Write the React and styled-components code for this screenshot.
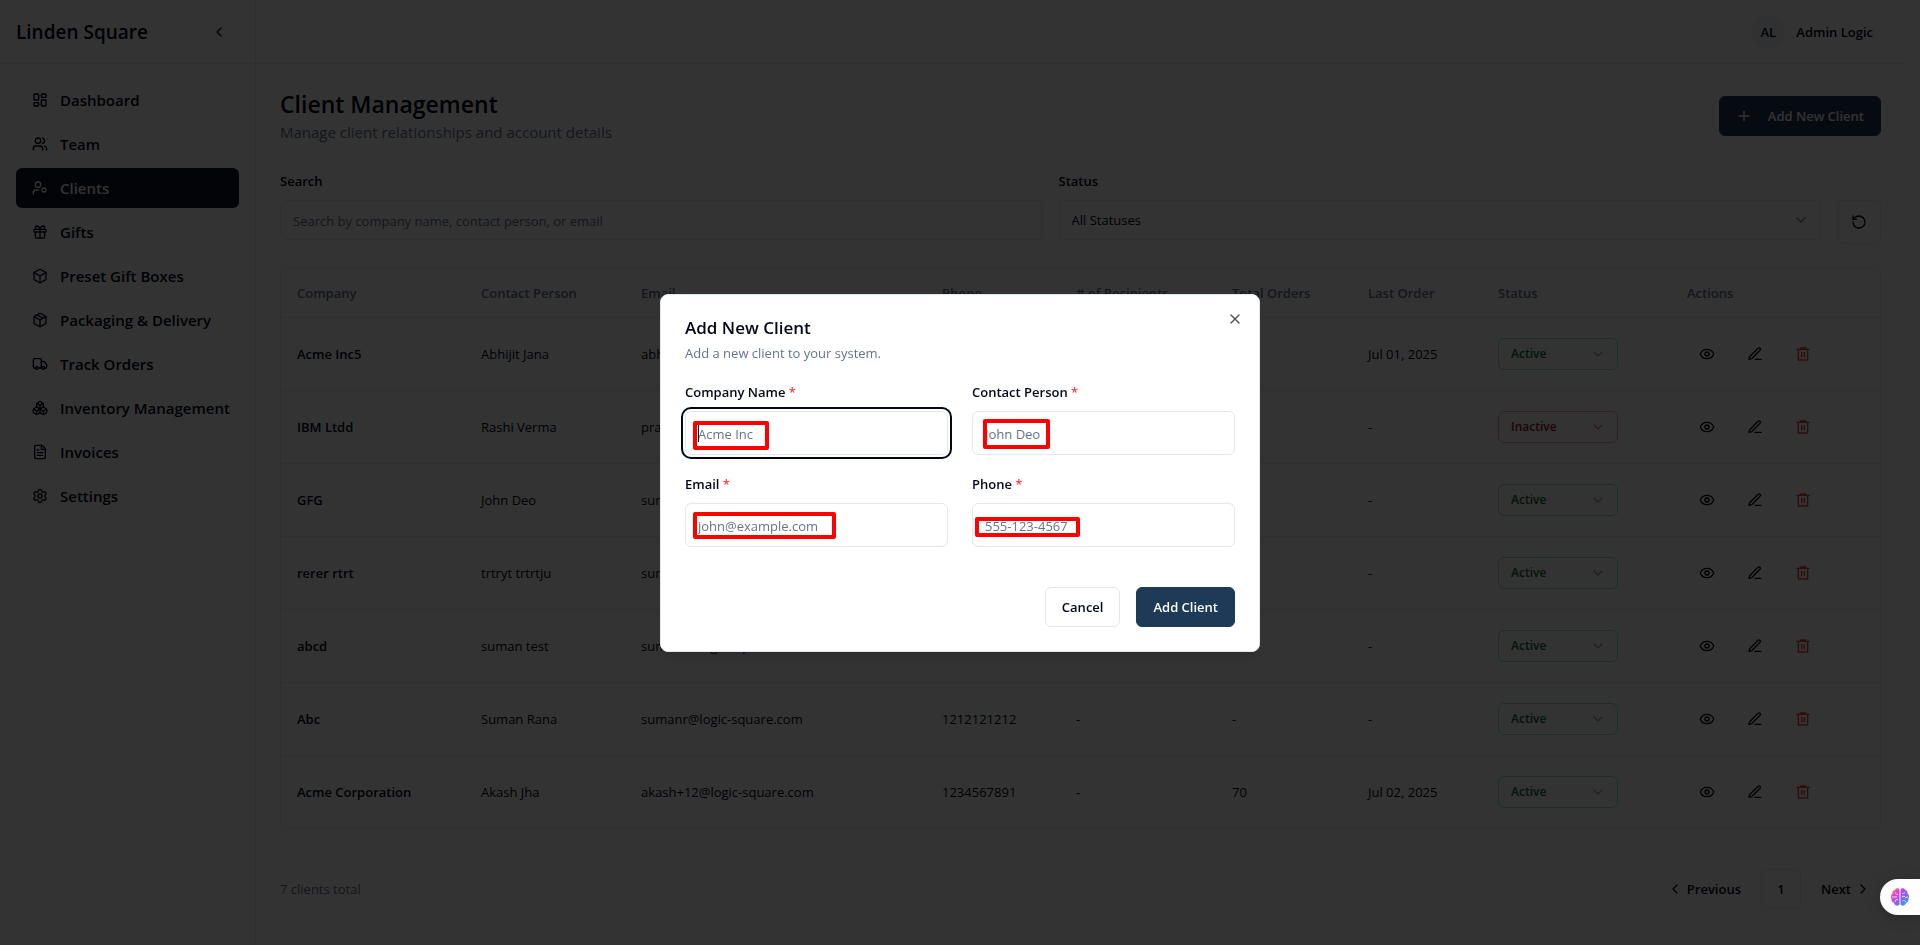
import React from "react";
import styled, { createGlobalStyle, css } from "styled-components";
import {
  Box, Boxes, ChevronDown, ChevronLeft, ChevronRight, Eye, FileText, Gift,
  LayoutDashboard, Package, Plus, RotateCcw, Settings, Truck, Users, X,
} from "lucide-react";
import { RiDeleteBin6Line } from "react-icons/ri";

const ink = "#020817";
const muted = "#64748b";
const line = "#e2e8f0";
const navy = "#1e3a56";

const GlobalStyle = createGlobalStyle`
  *, *::before, *::after { box-sizing: border-box; }
  html { background: #fff; }
  body {
    margin: 0;
    padding-right: 15px;
    color: ${ink};
    font: 400 13px/20px "Segoe UI", "Open Sans", "Noto Sans", sans-serif;
    overflow: hidden;
  }
  h1, h2, p { margin: 0; }
  button, input, select { font: inherit; color: inherit; }
  button { cursor: pointer; }
`;

const Shell = styled.div`
  display: flex;
  min-height: 100vh;
`;

const Sidebar = styled.aside`
  flex: 0 0 256px;
  min-width: 0;
  border-right: 1px solid ${line};
`;

const Brand = styled.div`
  display: flex;
  align-items: center;
  justify-content: space-between;
  height: 64px;
  padding: 0 16px;
  border-bottom: 1px solid ${line};
  font-size: 19px;
  font-weight: 600;
  line-height: 28px;
`;

const PlainButton = styled.button`
  display: inline-flex;
  align-items: center;
  justify-content: center;
  width: 40px;
  height: 40px;
  padding: 0;
  border: 0;
  border-radius: 6px;
  background: transparent;
  color: ${(p) => (p.$danger ? "#ef4444" : ink)};
`;

const Nav = styled.nav`
  display: flex;
  flex-direction: column;
  gap: 4px;
  padding: 16px;
`;

const NavLink = styled.a`
  display: flex;
  align-items: center;
  gap: 12px;
  height: 40px;
  padding: 0 0 0 16px;
  border-radius: 6px;
  font-size: 15px;
  font-weight: 600;
  white-space: nowrap;
  text-decoration: none;
  color: ${(p) => (p.$active ? "#f8fafc" : ink)};
  background: ${(p) => (p.$active ? "#0f172a" : "transparent")};
  svg { flex: none; }
`;

const Content = styled.div`
  flex: 1;
  min-width: 0;
`;

const TopBar = styled.header`
  display: flex;
  align-items: center;
  justify-content: flex-end;
  gap: 12px;
  height: 64px;
  padding: 0 32px;
  border-bottom: 1px solid ${line};
  font-weight: 600;
`;

const Avatar = styled.span`
  display: grid;
  place-items: center;
  width: 32px;
  height: 32px;
  border-radius: 50%;
  background: #f1f5f9;
`;

const Main = styled.main`
  display: flex;
  flex-direction: column;
  padding: 24px;
`;

const TitleRow = styled.div`
  display: flex;
  align-items: center;
  justify-content: space-between;
`;

const Title = styled.h1`
  font-size: 23px;
  font-weight: 600;
  line-height: 32px;
`;

const Subtitle = styled.p`
  font-size: 15px;
  line-height: 24px;
  color: ${muted};
`;

const Button = styled.button`
  display: inline-flex;
  align-items: center;
  justify-content: center;
  gap: 16px;
  height: 40px;
  padding: 0 16px;
  border: 1px solid ${(p) => (p.$outline ? line : navy)};
  border-radius: 6px;
  background: ${(p) => (p.$outline ? "#fff" : navy)};
  color: ${(p) => (p.$outline ? ink : "#f8fafc")};
  font-size: 13px;
  font-weight: 600;
`;

const Filters = styled.div`
  display: flex;
  align-items: flex-end;
  gap: 16px;
  margin: 28px 0 24px;
`;

const FilterField = styled.div`
  display: flex;
  flex: 1;
  flex-direction: column;
  gap: 10px;
  padding-bottom: 4px;
`;

const Label = styled.label`
  font-size: 13px;
  font-weight: 600;
  line-height: 18px;
`;

const inputLook = css`
  width: 100%;
  height: ${(p) => (p.$tall ? 44 : 40)}px;
  padding: 2px 12px 0;
  border: 1px solid ${line};
  border-radius: 6px;
  background: #fff;
  font-size: 13px;
  &::placeholder { color: ${muted}; opacity: 1; }
`;

const TextInput = styled.input`
  ${inputLook}
  &:focus {
    outline: 2px solid ${ink};
    outline-offset: 2px;
  }
`;

const SelectWrap = styled.div`
  display: grid;
  align-items: center;
  width: ${(p) => (p.$compact ? "120px" : "100%")};
  > * { grid-area: 1 / 1; }
  > svg {
    justify-self: end;
    margin-right: 12px;
    opacity: 0.5;
    pointer-events: none;
  }
`;

const FilterSelect = styled.select`
  ${inputLook}
  padding-top: 0;
  appearance: none;
`;

const tones = {
  Active: { text: "#166534", edge: "#86efac" },
  Inactive: { text: "#991b1b", edge: "#fca5a5" },
};

const StatusSelect = styled.select`
  appearance: none;
  width: 100%;
  height: 32px;
  padding: 0 12px;
  border: 1px solid ${(p) => tones[p.$tone].edge};
  border-radius: 6px;
  background: #fff;
  color: ${(p) => tones[p.$tone].text};
  font-size: 12px;
  font-weight: 600;
`;

const RefreshButton = styled(Button)`
  width: 44px;
  height: 44px;
  padding: 0;
`;

const TableFrame = styled.div`
  border: 1px solid ${line};
  border-radius: 6px;
`;

const Table = styled.table`
  width: 100%;
  table-layout: fixed;
  border-collapse: separate;
  border-spacing: 0;
  font-size: 13px;
  white-space: nowrap;
`;

const Head = styled.th`
  height: 49px;
  padding: 0 16px;
  border-bottom: 1px solid ${line};
  color: ${muted};
  font-weight: 600;
  text-align: left;
`;

const Cell = styled.td`
  height: 73px;
  padding: 0 16px;
  border-bottom: 1px solid ${line};
  font-weight: ${(p) => (p.$strong ? 600 : 400)};
  tr:last-child > & {
    height: 72px;
    border-bottom: 0;
  }
`;

const Actions = styled.div`
  display: flex;
  gap: 8px;
`;

const Footer = styled.footer`
  display: flex;
  align-items: center;
  justify-content: space-between;
  margin-top: 40px;
  color: ${muted};
`;

const Pager = styled.div`
  display: flex;
  gap: 4px;
`;

const PageButton = styled.button`
  display: inline-flex;
  align-items: center;
  justify-content: center;
  gap: 4px;
  min-width: 40px;
  height: 40px;
  padding: ${(p) => (p.$side === "left" ? "0 16px 0 10px" : p.$side === "right" ? "0 10px 0 16px" : "0")};
  border: ${(p) => (p.$side ? "0" : `1px solid ${line}`)};
  border-radius: 6px;
  background: transparent;
  color: ${ink};
  font-size: 13px;
  font-weight: 600;
`;

const Overlay = styled.div`
  position: fixed;
  inset: 0;
  display: grid;
  place-items: center;
  background: rgba(0, 0, 0, 0.8);
`;

const Dialog = styled.form`
  position: relative;
  width: 600px;
  max-width: 100%;
  padding: 24px;
  border: 1px solid ${line};
  border-radius: 8px;
  background: #fff;
  box-shadow: 0 10px 15px -3px rgba(0, 0, 0, 0.1), 0 4px 6px -4px rgba(0, 0, 0, 0.1);
`;

const DialogTitle = styled.h2`
  margin-bottom: 6px;
  font-size: 17px;
  font-weight: 600;
  line-height: 18px;
`;

const DialogText = styled.p`
  font-size: 13px;
  line-height: 20px;
  color: ${muted};
`;

const CloseButton = styled.button`
  position: absolute;
  top: 16px;
  right: 16px;
  display: grid;
  width: 16px;
  height: 16px;
  padding: 0;
  border: 0;
  background: transparent;
  opacity: 0.7;
`;

const FieldGrid = styled.div`
  display: grid;
  grid-template-columns: 1fr 1fr;
  gap: 20px 24px;
  margin: 20px 0 40px;
`;

const Field = styled.div`
  display: flex;
  flex-direction: column;
  gap: 10px;
`;

const Required = styled.span`
  color: #ef4444;
`;

const Marked = styled.div`
  position: relative;
`;

const Mark = styled.span`
  position: absolute;
  left: ${(p) => p.$x}px;
  top: ${(p) => p.$y}px;
  width: ${(p) => p.$w}px;
  height: ${(p) => p.$h}px;
  border: 4px solid #f00;
  border-radius: 2px;
  pointer-events: none;
`;

const Caret = styled.span`
  position: absolute;
  left: 13px;
  top: 14px;
  width: 1px;
  height: 17px;
  background: ${ink};
  pointer-events: none;
`;

const DialogFooter = styled.div`
  display: flex;
  justify-content: flex-end;
  gap: 16px;
`;

const Assistant = styled.button`
  position: fixed;
  right: 0;
  bottom: 30px;
  display: flex;
  align-items: center;
  width: 40px;
  height: 36px;
  padding: 0 0 0 10px;
  border: 0;
  border-radius: 18px 0 0 18px;
  background: #fff;
  box-shadow: 0 2px 16px rgba(0, 0, 0, 0.2);
`;

const StrokeIcon = ({ children }) => (
  <svg width="16" height="16" viewBox="0 0 24 24" fill="none" stroke="currentColor" strokeWidth="2" strokeLinecap="round" strokeLinejoin="round">
    {children}
  </svg>
);

const ClientIcon = () => (
  <StrokeIcon>
    <circle cx="9" cy="7" r="4" />
    <path d="M2 21v-2a4 4 0 0 1 4-4h4" />
    <circle cx="18" cy="15" r="3" />
  </StrokeIcon>
);

const PenIcon = () => (
  <StrokeIcon>
    <path d="M12 20h9" />
    <path d="M16.500 3.500a2.120 2.120 0 0 1 3 3L7 19l-4 1 1-4Z" />
  </StrokeIcon>
);

const Brain = () => (
  <svg width="20" height="20" viewBox="0 0 20 20" fill="none">
    <defs>
      <linearGradient id="brain" x1="2" y1="2" x2="18" y2="17" gradientUnits="userSpaceOnUse">
        <stop offset="0" stopColor="#ff9a3d" />
        <stop offset="0.250" stopColor="#e83fd0" />
        <stop offset="0.600" stopColor="#8b5cf6" />
        <stop offset="1" stopColor="#22a7ff" />
      </linearGradient>
    </defs>
    <path fill="url(#brain)" d="M9.500 2.500C8.500.600 5.500.700 4.800 2.900 2.900 3.200 2 5.100 2.600 6.600.700 7.600.500 10.200 1.500 11.400 1 13.500 2.200 15.300 3.900 15.700 4.600 18.800 8.300 19.500 9.500 17.500Z" />
    <path fill="url(#brain)" d="M10.500 2.500c1-1.900 4-1.800 4.700.400 1.900.300 2.800 2.200 2.200 3.700 1.900 1 2.100 3.600 1.100 4.800.500 2.100-.700 3.900-2.400 4.300-.700 3.100-4.400 3.800-5.600 1.800Z" />
    <path stroke="#fff" strokeOpacity="0.800" d="M2 10h5M5.500 5.500c0 1.500 1 2 2.500 2M5 15c0-2 1-2.500 3-2.500M12.500 6.500c1.500 0 2-.500 2.500-1.500M12 10l2-1 1.500 1.500L18 10M12.500 14c1.500-1 2.500-.500 3 1" />
  </svg>
);

const navItems = [
  ["Dashboard", LayoutDashboard],
  ["Team", Users],
  ["Clients", ClientIcon],
  ["Gifts", Gift],
  ["Preset Gift Boxes", Box],
  ["Packaging & Delivery", Package],
  ["Track Orders", Truck],
  ["Inventory Management", Boxes],
  ["Invoices", FileText],
  ["Settings", Settings],
];

const columns = [
  ["Company", 184], ["Contact Person", 160], ["Email", 301], ["Phone", 134],
  ["# of Recipients", 156], ["Total Orders", 136], ["Last Order", 130],
  ["Status", 189], ["Actions", 209],
];

const clients = [
  ["Acme Inc5", "Abhijit Jana", "abhijit@logic-square.com", "1234567890", "-", "-", "Jul 01, 2025", "Active"],
  ["IBM Ltdd", "Rashi Verma", "pratik@logic-square.com", "1234567890", "-", "-", "-", "Inactive"],
  ["GFG", "John Deo", "suman@logic-square.com", "1234567890", "-", "-", "-", "Active"],
  ["rerer rtrt", "trtryt trtrtju", "suman@logic-square.com", "1234567890", "-", "-", "-", "Active"],
  ["abcd", "suman test", "sumanr@logic-square.com", "1234567890", "-", "-", "-", "Active"],
  ["Abc", "Suman Rana", "sumanr@logic-square.com", "1212121212", "-", "-", "-", "Active"],
  ["Acme Corporation", "Akash Jha", "akash+12@logic-square.com", "1234567891", "-", "70", "Jul 02, 2025", "Active"],
];

const fields = [
  { id: "company", label: "Company Name", hint: "Acme Inc", type: "text", mark: [8, 10, 76, 29] },
  { id: "contact", label: "Contact Person", hint: "John Deo", type: "text", mark: [11, 8, 67, 30] },
  { id: "email", label: "Email", hint: "john@example.com", type: "email", mark: [8, 9, 143, 27] },
  { id: "phone", label: "Phone", hint: "555-123-4567", type: "tel", mark: [3, 14, 105, 20] },
];

function ClientRow({ client }) {
  const status = client[7];
  return (
    <tr>
      {client.slice(0, 7).map((value, i) => (
        <Cell key={i} $strong={i === 0}>{value}</Cell>
      ))}
      <Cell>
        <SelectWrap $compact>
          <StatusSelect $tone={status} defaultValue={status} aria-label={`Status of ${client[0]}`}>
            <option>Active</option>
            <option>Inactive</option>
          </StatusSelect>
          <ChevronDown size={16} color={tones[status].text} />
        </SelectWrap>
      </Cell>
      <Cell>
        <Actions>
          <PlainButton aria-label="View"><Eye size={16} /></PlainButton>
          <PlainButton aria-label="Edit"><PenIcon /></PlainButton>
          <PlainButton $danger aria-label="Delete"><RiDeleteBin6Line size={16} /></PlainButton>
        </Actions>
      </Cell>
    </tr>
  );
}

function AddClientDialog() {
  return (
    <Overlay>
      <Dialog role="dialog" aria-labelledby="dialog-title" onSubmit={(e) => e.preventDefault()}>
        <DialogTitle id="dialog-title">Add New Client</DialogTitle>
        <DialogText>Add a new client to your system.</DialogText>
        <FieldGrid>
          {fields.map((f, i) => (
            <Field key={f.id}>
              <Label htmlFor={f.id}>{f.label} <Required>*</Required></Label>
              <Marked>
                <TextInput $tall id={f.id} type={f.type} placeholder={f.hint} autoFocus={i === 0} />
                {i === 0 && <Caret />}
                <Mark $x={f.mark[0]} $y={f.mark[1]} $w={f.mark[2]} $h={f.mark[3]} />
              </Marked>
            </Field>
          ))}
        </FieldGrid>
        <DialogFooter>
          <Button type="button" $outline>Cancel</Button>
          <Button type="submit">Add Client</Button>
        </DialogFooter>
        <CloseButton type="button" aria-label="Close"><X size={16} /></CloseButton>
      </Dialog>
    </Overlay>
  );
}

export default function App() {
  return (
    <>
      <GlobalStyle />
      <Shell>
        <Sidebar>
          <Brand>
            Linden Square
            <PlainButton aria-label="Collapse sidebar"><ChevronLeft size={16} /></PlainButton>
          </Brand>
          <Nav>
            {navItems.map(([name, Icon]) => (
              <NavLink key={name} href="#" $active={name === "Clients"}>
                <Icon size={16} />
                {name}
              </NavLink>
            ))}
          </Nav>
        </Sidebar>
        <Content>
          <TopBar>
            <Avatar>AL</Avatar>
            Admin Logic
          </TopBar>
          <Main>
            <TitleRow>
              <div>
                <Title>Client Management</Title>
                <Subtitle>Manage client relationships and account details</Subtitle>
              </div>
              <Button><Plus size={16} />Add New Client</Button>
            </TitleRow>
            <Filters>
              <FilterField>
                <Label htmlFor="search">Search</Label>
                <TextInput id="search" placeholder="Search by company name, contact person, or email" />
              </FilterField>
              <FilterField>
                <Label htmlFor="status">Status</Label>
                <SelectWrap>
                  <FilterSelect id="status"><option>All Statuses</option></FilterSelect>
                  <ChevronDown size={16} />
                </SelectWrap>
              </FilterField>
              <RefreshButton $outline aria-label="Reset filters"><RotateCcw size={16} /></RefreshButton>
            </Filters>
            <TableFrame>
              <Table>
                <colgroup>
                  {columns.map(([name, width]) => <col key={name} width={width} />)}
                </colgroup>
                <thead>
                  <tr>{columns.map(([name]) => <Head key={name}>{name}</Head>)}</tr>
                </thead>
                <tbody>
                  {clients.map((c) => <ClientRow key={c[0]} client={c} />)}
                </tbody>
              </Table>
            </TableFrame>
            <Footer>
              <span>7 clients total</span>
              <Pager>
                <PageButton $side="left"><ChevronLeft size={16} />Previous</PageButton>
                <PageButton>1</PageButton>
                <PageButton $side="right">Next<ChevronRight size={16} /></PageButton>
              </Pager>
            </Footer>
          </Main>
        </Content>
      </Shell>
      <AddClientDialog />
      <Assistant aria-label="Open assistant"><Brain /></Assistant>
    </>
  );
}
